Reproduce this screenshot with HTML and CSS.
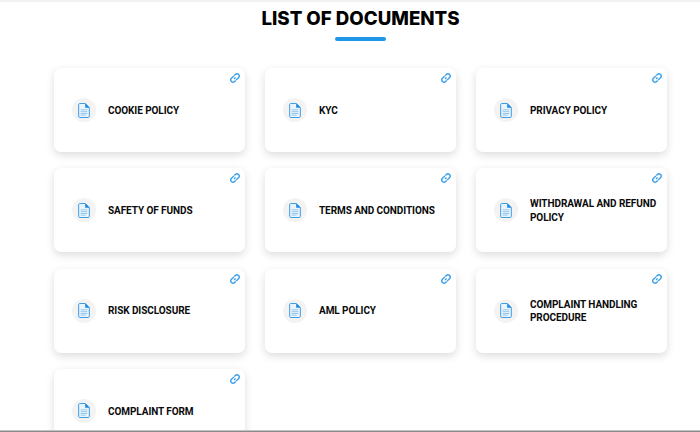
FILE: index.html
```html
<!DOCTYPE html>
<html lang="en">
<head>
<meta charset="utf-8">
<title>List of Documents</title>
<link rel="stylesheet" href="styles.css">
</head>
<body>
<svg class="defs" width="0" height="0" aria-hidden="true">
  <symbol id="doc" viewBox="0 0 14 18">
    <path d="M1.6.6H8.6L13.4 5.4V16a1.4 1.4 0 0 1-1.4 1.4H2A1.4 1.4 0 0 1 .6 16V2A1.4 1.4 0 0 1 1.6.6Z" fill="#eaf4fc" stroke="#3f9de4" stroke-width="1.2"/>
    <path d="M8.4.4 13.6 5.6H8.4Z" fill="#1e88e5"/>
    <path d="M3 8.2H11M3 10.4H11M3 12.6H11M3 14.6H9" stroke="#8fc3ea" stroke-width="1.1" fill="none"/>
  </symbol>
  <symbol id="link" viewBox="0 0 24 24">
    <g transform="rotate(-45 12 12)" fill="none" stroke="#3a9ee8" stroke-width="2.8">
      <path d="M13.5 7.5H6.5a4.5 4.5 0 0 0 0 9H9.5"/>
      <path d="M9.5 12H13.5"/>
      <path d="M10.5 16.5H17.5a4.5 4.5 0 0 0 0-9H14.5"/>
    </g>
  </symbol>
</svg>
<main class="page">
  <h1 class="title">LIST OF DOCUMENTS</h1>
  <div class="rule"></div>
  <section class="grid">
    <a class="card"><svg class="link"><use href="#link"/></svg><span class="badge"><svg class="doc"><use href="#doc"/></svg></span><span class="name">COOKIE POLICY</span></a>
    <a class="card"><svg class="link"><use href="#link"/></svg><span class="badge"><svg class="doc"><use href="#doc"/></svg></span><span class="name">KYC</span></a>
    <a class="card"><svg class="link"><use href="#link"/></svg><span class="badge"><svg class="doc"><use href="#doc"/></svg></span><span class="name">PRIVACY POLICY</span></a>
    <a class="card"><svg class="link"><use href="#link"/></svg><span class="badge"><svg class="doc"><use href="#doc"/></svg></span><span class="name">SAFETY OF FUNDS</span></a>
    <a class="card"><svg class="link"><use href="#link"/></svg><span class="badge"><svg class="doc"><use href="#doc"/></svg></span><span class="name">TERMS AND CONDITIONS</span></a>
    <a class="card"><svg class="link"><use href="#link"/></svg><span class="badge"><svg class="doc"><use href="#doc"/></svg></span><span class="name">WITHDRAWAL AND REFUND POLICY</span></a>
    <a class="card"><svg class="link"><use href="#link"/></svg><span class="badge"><svg class="doc"><use href="#doc"/></svg></span><span class="name">RISK DISCLOSURE</span></a>
    <a class="card"><svg class="link"><use href="#link"/></svg><span class="badge"><svg class="doc"><use href="#doc"/></svg></span><span class="name">AML POLICY</span></a>
    <a class="card"><svg class="link"><use href="#link"/></svg><span class="badge"><svg class="doc"><use href="#doc"/></svg></span><span class="name">COMPLAINT HANDLING PROCEDURE</span></a>
    <a class="card"><svg class="link"><use href="#link"/></svg><span class="badge"><svg class="doc"><use href="#doc"/></svg></span><span class="name">COMPLAINT FORM</span></a>
  </section>
</main>
<div class="edge"></div>
</body>
</html>
```
FILE: styles.css
```css
html, body { margin: 0; height: 432px; overflow: hidden; background: #fff; }
.defs { position: absolute; }
.page {
  box-sizing: border-box;
  height: 432px;
  overflow: hidden;
  padding: 7px 33px 0 54px;
  border-top: 2px solid #f2f2f2;
  font-family: Roboto, "Liberation Sans", sans-serif;
}
.title {
  margin: 0;
  text-align: center;
  font-family: Inter, "Liberation Sans", sans-serif;
  font-size: 18.7px;
  line-height: 19px;
  font-weight: 800;
  color: #000;
}
.rule { width: 51px; height: 4px; margin: 9px auto 0; background: #1e96ea; border-radius: 2px; }
.grid {
  display: grid;
  grid-template-columns: repeat(3, 191px);
  grid-auto-rows: 84px;
  gap: 16.33px 20px;
  margin-top: 27px;
}
.card {
  position: relative;
  display: flex;
  align-items: center;
  gap: 12px;
  padding: 1px 8px 0 18px;
  background: #fff;
  border-radius: 7px;
  box-shadow: 0 3px 9px rgba(0, 0, 0, .14);
}
.badge {
  flex: none;
  display: flex;
  align-items: center;
  justify-content: center;
  width: 24px;
  height: 24px;
  margin-top: -1px;
  border-radius: 50%;
  background: #f3f3f3;
}
.doc { width: 12px; height: 15px; }
.link { position: absolute; top: 4px; right: 4px; width: 12px; height: 12px; }
.name { font-size: 10px; letter-spacing: -.08px; line-height: 13.5px; font-weight: 700; color: #0a0a0a; }
.edge { position: fixed; left: 0; right: 0; bottom: 0; height: 1px; background: #8a8a8a; box-shadow: 0 -1px 0 #c4c4c4; }
```
